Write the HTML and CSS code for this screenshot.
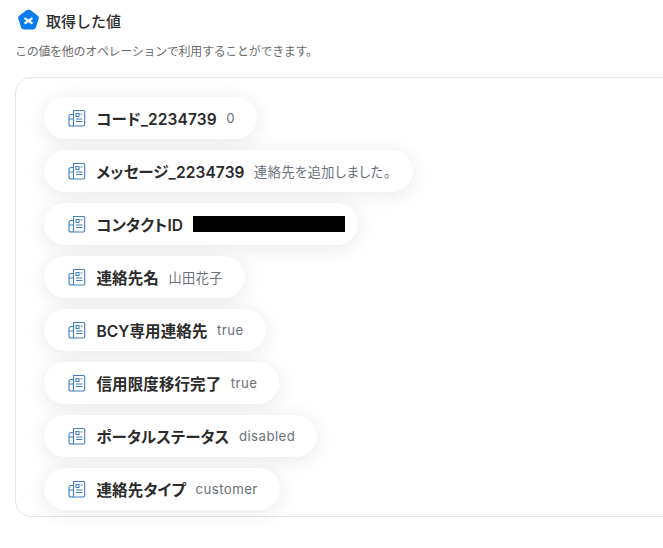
FILE: index.html
```html
<!DOCTYPE html>
<html lang="ja">
<head>
    <title>取得した値</title>
    <link rel="stylesheet" href="styles.css">
</head>
<body>
    <svg width="0" height="0" class="defs">
        <symbol id="doc" viewBox="0 0 18 18">
            <path d="M5.500 1.500h10.200a1 1 0 0 1 1 1v13a1.500 1.500 0 0 1-1.500 1.500H3a2 2 0 0 1-2-2V7.500a2 2 0 0 1 2-2h2.500zM5.500 2v13.500a1.500 1.500 0 0 1-1.500 1.500M1 10h4.500" fill="none" stroke="currentColor" stroke-width="1.100" stroke-linejoin="round"/>
            <path d="M8 4.500h3v3H8zM8 10h6.500M8 12.500h6.500M12.500 5h2" fill="none" stroke="currentColor" stroke-width="1.100"/>
        </symbol>
    </svg>

    <div class="heading">
        <svg class="logo" width="23" height="23" viewBox="0 0 23 23">
            <path d="M9.700 1.100a3 3 0 0 1 3.600 0l7.300 5.300a3 3 0 0 1 1.100 3.400l-2.800 8.600a3 3 0 0 1-2.900 2.100H7a3 3 0 0 1-2.900-2.100L1.300 9.800a3 3 0 0 1 1.100-3.400z" fill="#0a7cf2"/>
            <path d="M8.300 9.600l6.400 4.400M14.700 9.600l-6.400 4.400" stroke="#fff" stroke-width="2.200" stroke-linecap="round"/>
        </svg>
        <h1>取得した値</h1>
    </div>
    <p class="note">この値を他のオペレーションで利用することができます。</p>

    <div class="panel">
        <div class="chip"><svg class="icon"><use href="#doc"/></svg><span class="name">コード_2234739</span><span class="val">0</span></div>
        <div class="chip"><svg class="icon"><use href="#doc"/></svg><span class="name">メッセージ_2234739</span><span class="val">連絡先を追加しました。</span></div>
        <div class="chip chip-masked"><svg class="icon"><use href="#doc"/></svg><span class="name">コンタクトID</span><span class="mask"></span></div>
        <div class="chip"><svg class="icon"><use href="#doc"/></svg><span class="name">連絡先名</span><span class="val">山田花子</span></div>
        <div class="chip"><svg class="icon"><use href="#doc"/></svg><span class="name">BCY専用連絡先</span><span class="val">true</span></div>
        <div class="chip"><svg class="icon"><use href="#doc"/></svg><span class="name">信用限度移行完了</span><span class="val">true</span></div>
        <div class="chip"><svg class="icon"><use href="#doc"/></svg><span class="name">ポータルステータス</span><span class="val">disabled</span></div>
        <div class="chip"><svg class="icon"><use href="#doc"/></svg><span class="name">連絡先タイプ</span><span class="val">customer</span></div>
    </div>
</body>
</html>
```

FILE: styles.css
```css
html, body {
    height: 100%;
    overflow: hidden;
}
body {
    margin: 0;
    padding: 9px 0 0 15px;
    box-sizing: border-box;
    background: #fff;
    color: #2b2b2b;
    font-family: Inter, "Noto Sans CJK JP", sans-serif;
}
.defs {
    display: block;
    height: 0;
}
.heading {
    display: flex;
    align-items: center;
    gap: 6px;
    padding-left: 2px;
    height: 23px;
}
h1 {
    margin: 0;
    font-size: 15px;
    font-weight: 500;
}
.note {
    margin: 11px 0 0;
    font-size: 12px;
    line-height: 18px;
    letter-spacing: -0.3px;
    color: #6b6b6b;
}
.panel {
    width: 700px;
    margin-top: 16px;
    padding: 19px 28px 6px;
    box-sizing: border-box;
    display: flex;
    flex-direction: column;
    align-items: flex-start;
    gap: 11px;
    border: 1px solid #e3e5e8;
    border-radius: 16px;
}
.chip {
    display: flex;
    align-items: center;
    height: 42px;
    padding: 0 22px 0 24px;
    box-sizing: border-box;
    background: #fff;
    border-radius: 22px;
    box-shadow: 0 3px 20px rgba(0, 0, 0, 0.09);
}
.chip-masked {
    padding-right: 13px;
}
.icon {
    width: 18px;
    height: 18px;
    color: #3f7fc4;
    margin-right: 10.5px;
    flex: none;
}
.name {
    font-size: 15.5px;
    font-weight: 600;
    letter-spacing: 0.1px;
    color: #2b2b2b;
    font-feature-settings: "palt";
}
.val {
    margin-left: 9.5px;
    font-size: 13.2px;
    letter-spacing: 0.45px;
    color: #6a7079;
    font-feature-settings: "palt";
}
.mask {
    width: 152px;
    height: 16px;
    margin-left: 10px;
    background: #000;
}
```
